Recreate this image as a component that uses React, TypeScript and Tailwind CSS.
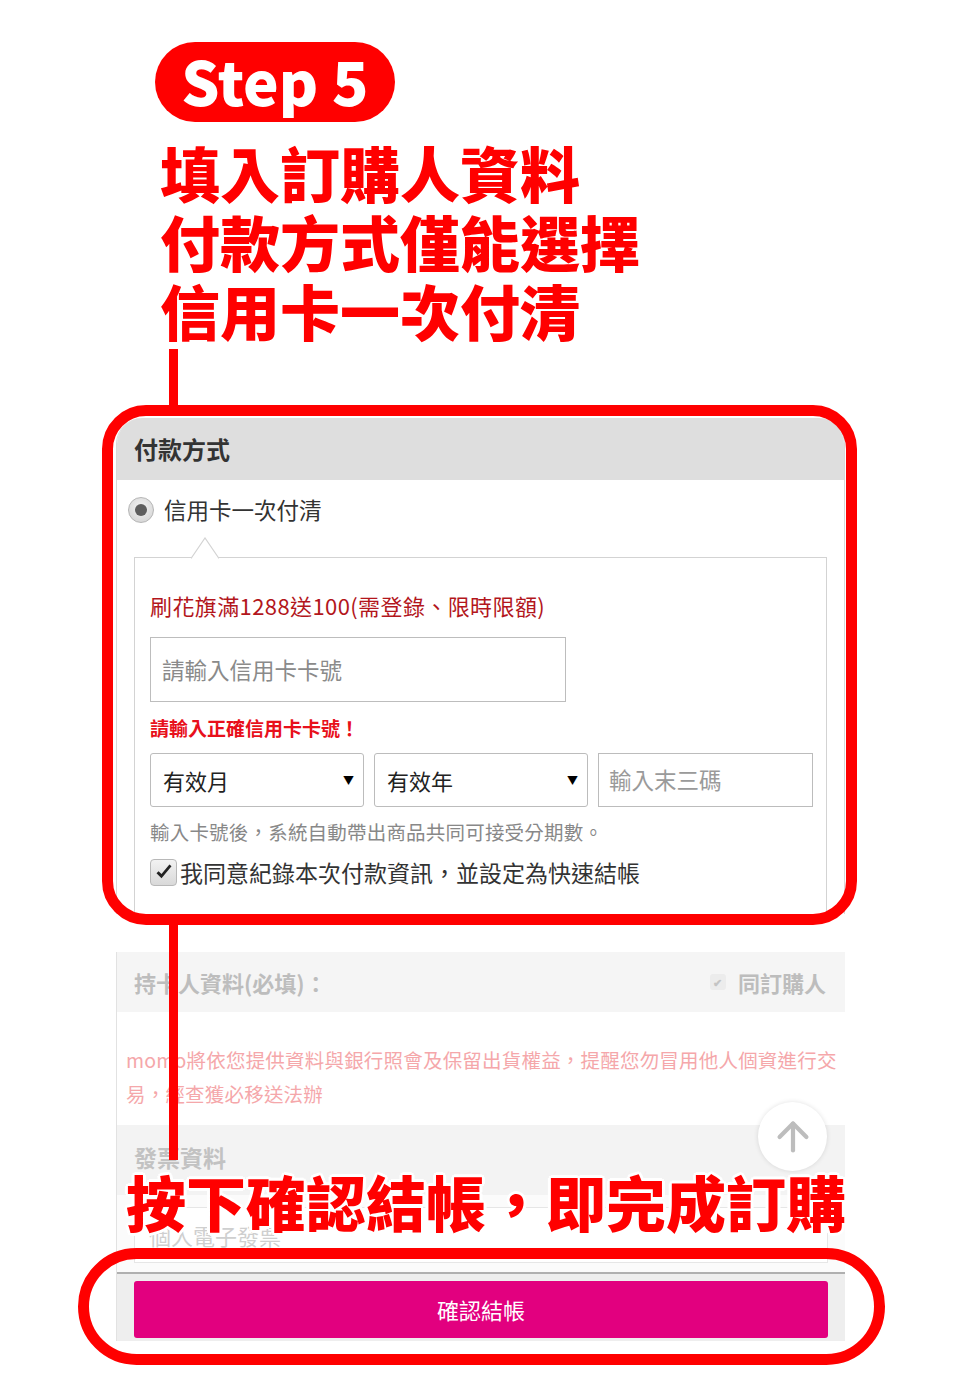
import { ArrowUp } from 'lucide-react'

function Radio() {
  return (
    <span className="flex h-[26px] w-[26px] items-center justify-center rounded-full border border-[#b5b5b5] bg-[radial-gradient(circle_at_50%_40%,#f4f4f4,#cfcfcf)]">
      <span className="h-[12px] w-[12px] rounded-full bg-[#5e5e5e]" />
    </span>
  )
}

function CheckBox() {
  return (
    <span className="flex h-[27px] w-[27px] items-center justify-center rounded-[4px] border border-[#b8b8b8] bg-[linear-gradient(#f2f2f2,#d9d9d9)]">
      <svg viewBox="0 0 24 24" className="h-[20px] w-[20px]">
        <path d="M3 13.5 L9 19.5 L21 5 L18.5 3 L9 14.5 L5.5 11 Z" fill="#222" />
      </svg>
    </span>
  )
}

function SelectBox({ label }: { label: string }) {
  return (
    <div className="flex h-[54px] w-[214px] items-center justify-between rounded-[3px] border border-[#bcbcbc] pl-[12px] pr-[9px] text-[22px] text-[#222]">
      <span>{label}</span>
      <span className="text-[11px] text-black">▼</span>
    </div>
  )
}

export default function App() {
  return (
    <div className="relative h-[1400px] w-[960px] overflow-hidden bg-white font-['Noto_Sans_CJK_TC','Noto_Sans',sans-serif]">
      {/* Step badge + title */}
      <div className="pl-[155px] pt-[42px]">
        <div className="flex h-[80px] w-[240px] items-center justify-center rounded-full bg-[#ff0000] pb-[4px] text-[60px] font-black leading-none text-white">
          Step 5
        </div>
      </div>
      <div className="mt-[15px] pl-[160px] text-[60px] font-black leading-[69px] text-[#ff0000]">
        <p>填入訂購人資料</p>
        <p>付款方式僅能選擇</p>
        <p>信用卡一次付清</p>
      </div>

      {/* Payment panel */}
      <div className="ml-[116px] mt-[74px] h-[496px] w-[729px] overflow-hidden rounded-t-[26px] border-x border-[#d8d8d8]">
        <div className="flex h-[62px] items-center bg-[#dedede] pl-[17px] text-[24px] font-bold text-[#333]">
          付款方式
        </div>
        <div className="mt-[17px] flex h-[26px] items-center gap-[10px] pl-[11px]">
          <Radio />
          <span className="text-[22.5px] text-[#333]">信用卡一次付清</span>
        </div>

        <div className="relative mx-[17px] mt-[34px] border border-[#d3d3d3] pb-[40px] pl-[15px] pt-[32px]">
          <svg className="absolute left-[56px] top-[-21px] h-[22px] w-[28px]" viewBox="0 0 28 22">
            <path d="M0 21.5 L14 1 L28 21.5" fill="#fff" stroke="#d3d3d3" strokeWidth="1.2" />
          </svg>
          <p className="text-[22px] leading-[30px] tracking-[0.4px] text-[#b3161c]">
            刷花旗滿1288送100(需登錄、限時限額)
          </p>
          <div className="mt-[17px] flex h-[65px] w-[416px] items-center border-[1.5px] border-[#bdbdbd] pl-[11px] text-[22.5px] text-[#8a8a8a]">
            請輸入信用卡卡號
          </div>
          <p className="mt-[13px] text-[19px] font-bold leading-[26px] text-[#e8101b]">請輸入正確信用卡卡號！</p>
          <div className="mt-[12px] flex gap-[10px]">
            <SelectBox label="有效月" />
            <SelectBox label="有效年" />
            <div className="flex h-[54px] w-[215px] items-center border border-[#bcbcbc] pl-[10px] text-[22.5px] text-[#9a9a9a]">
              輸入末三碼
            </div>
          </div>
          <p className="mt-[12px] text-[19.5px] leading-[26px] tracking-[0.2px] text-[#888]">
            輸入卡號後，系統自動帶出商品共同可接受分期數。
          </p>
          <div className="mt-[12px] flex h-[30px] items-center gap-[3px]">
            <CheckBox />
            <span className="text-[23px] text-[#333]">我同意紀錄本次付款資訊，並設定為快速結帳</span>
          </div>
        </div>
      </div>

      {/* Faded lower part of the page */}
      <div className="ml-[116px] mt-[38px] w-[729px] border-l border-[#e2e2e2]">
        <div className="flex h-[60px] items-center justify-between bg-[#f5f5f5] pl-[17px] pr-[19px] text-[22px] font-bold text-[#bdbdbd]">
          <span>持卡人資料(必填)：</span>
          <span className="flex items-center gap-[12px]">
            <span className="flex h-[16px] w-[16px] items-center justify-center rounded-[3px] bg-[#ececec] text-[11px] text-[#c4c4c4]">✔</span>
            同訂購人
          </span>
        </div>
        <div className="h-[113px] bg-white pl-[9px] pt-[31px] text-[19.5px] leading-[34px] tracking-[0.2px] text-[#f5a7aa]">
          <p>momo將依您提供資料與銀行照會及保留出貨權益，提醒您勿冒用他人個資進行交</p>
          <p>易，經查獲必移送法辦</p>
        </div>
        <div className="flex h-[70px] items-start bg-[#f3f3f3] pl-[17px] pt-[17px] text-[23px] font-bold leading-[30px] text-[#c2c2c2]">
          發票資料
        </div>
        <div className="h-[77px] bg-[#fbfbfb] px-[17px] pt-[12px]">
          <div className="flex h-[56px] items-center border border-[#e6e6e6] bg-white pl-[14px] text-[22px] text-[#cfcfcf]">
            個人電子發票
          </div>
        </div>
        <div className="h-[69px] border-t-2 border-[#b0b0b0] bg-[#eeeeee] px-[17px] pt-[7px]">
          <div className="flex h-[57px] items-center justify-center rounded-[3px] bg-[#e2007f] text-[22px] text-white">
            確認結帳
          </div>
        </div>
      </div>

      {/* Annotations on top of the screenshot */}
      <div className="absolute left-[169px] top-[349px] h-[60px] w-[9px] bg-[#ff0000]" />
      <div className="absolute left-[102px] top-[405px] h-[520px] w-[755px] rounded-[44px] border-[11px] border-[#ff0000]" />
      <div className="absolute left-[169px] top-[920px] h-[240px] w-[9px] bg-[#ff0000]" />

      <div className="absolute left-[758px] top-[1102px] flex h-[69px] w-[69px] items-center justify-center rounded-full bg-white shadow-[0_0_5px_rgba(0,0,0,0.12)]">
        <ArrowUp className="h-[46px] w-[46px] text-[#bdbdbd]" strokeWidth={2.2} />
      </div>

      <p className="absolute left-[126px] top-[1166px] whitespace-nowrap text-[60px] font-black leading-[69px] text-[#ff0000] [text-shadow:3px_0_0_#fff,-3px_0_0_#fff,0_3px_0_#fff,0_-3px_0_#fff,2px_2px_0_#fff,-2px_-2px_0_#fff,2px_-2px_0_#fff,-2px_2px_0_#fff]">
        按下確認結帳，即完成訂購
      </p>

      <div className="absolute left-[78px] top-[1248px] h-[117px] w-[807px] rounded-full border-[11px] border-[#ff0000]" />
    </div>
  )
}
